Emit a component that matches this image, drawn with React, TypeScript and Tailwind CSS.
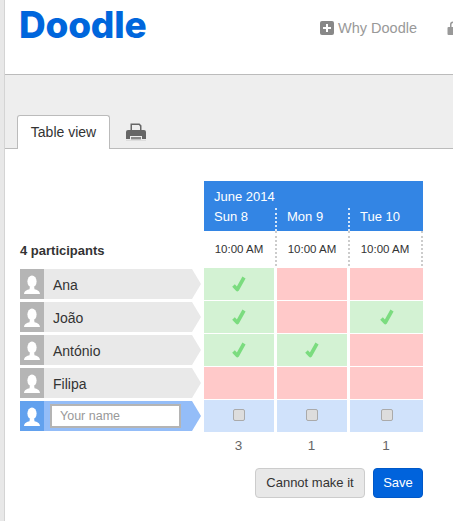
const participants = [
  { name: 'Ana', votes: [true, false, false] },
  { name: 'João', votes: [true, false, true] },
  { name: 'António', votes: [true, true, false] },
  { name: 'Filipa', votes: [false, false, false] },
];

const columns = [
  { day: 'Sun 8', total: 3 },
  { day: 'Mon 9', total: 1 },
  { day: 'Tue 10', total: 1 },
];

function Person() {
  return (
    <svg width="24" height="30" viewBox="0 0 24 30" fill="white">
      <ellipse cx="12" cy="12.5" rx="4.6" ry="6" />
      <path d="M9.8 18h4.4l.3 2.2c2.500.8 5.300 1.500 5.500 4.800H4c.2-3.300 3-4 5.500-4.800z" />
    </svg>
  );
}

function Check() {
  return (
    <svg width="16" height="18" viewBox="0 0 16 18" fill="none">
      <path d="M2.500 10.500 6.300 14.500 13 2.500" stroke="#7bdc7f" strokeWidth="3.600" strokeLinejoin="round" />
    </svg>
  );
}

function Printer() {
  return (
    <svg width="20" height="18" viewBox="0 0 20 18" className="mt-[2px]">
      <path d="M4.500.5h9l2 2v5h-1.500v-4l-1-1.500H6v5.500H4.500z" fill="#666" />
      <path d="M2 7h16a2 2 0 0 1 2 2v7H16v-3H4v3H0V9a2 2 0 0 1 2-2z" fill="#666" />
      <rect x="5" y="14" width="10" height="2.500" fill="#888" />
      <rect x="0" y="16.800" width="20" height="1.200" fill="#ddd" />
    </svg>
  );
}

function Lock() {
  return (
    <svg width="12" height="14" viewBox="0 0 12 14" fill="#999">
      <path d="M3 6V3.500a3 3 0 0 1 6 0V6H7.500V3.500a1.500 1.500 0 0 0-3 0V6z" />
      <rect x="0.500" y="6" width="11" height="8" rx="1" />
    </svg>
  );
}

export default function App() {
  return (
    <div className="flex w-[453px] h-[521px] overflow-hidden bg-white text-[#333] font-['Liberation_Sans',Arial,sans-serif]">
      <div className="w-[5px] shrink-0 bg-[#e8e8e8] border-r border-[#d4d4d4]" />
      <div className="w-[448px] shrink-0">
        {/* Header */}
        <div className="h-[75px] border-b border-[#bbb] flex items-start pl-[14px]">
          <div className="w-[301px] shrink-0 text-[37px] leading-[44px] font-extrabold font-['Inter',sans-serif] text-[#0066dc] tracking-[-0.250px] mt-[3px]">Doodle</div>
          <div className="flex items-center gap-[4px] mt-[20px] text-[#999] text-[14.500px] leading-[16px] whitespace-nowrap">
            <span className="w-[14px] h-[14px] rounded-[2px] bg-[#888] flex items-center justify-center">
              <svg width="10" height="10" viewBox="0 0 10 10" fill="white">
                <path d="M4 1h2v3h3v2H6v3H4V6H1V4h3z" />
              </svg>
            </span>
            <span>Why Doodle</span>
            <span className="ml-[26px]"><Lock /></span>
          </div>
        </div>

        {/* Tabs */}
        <div className="h-[74px] bg-[#eee] border-b border-[#bbb] flex items-end pl-[12px]">
          <div className="w-[93px] h-[34px] -mb-px bg-white border border-b-0 border-[#bbb] rounded-t-[3px] flex items-center justify-center text-[14px] text-[#333]">
            Table view
          </div>
          <div className="ml-[16px] mb-[7px]"><Printer /></div>
        </div>

        {/* Poll */}
        <div className="pl-[15px] pt-[32px]">
          <div className="grid grid-cols-[181px_70px_70px_73px] gap-x-[3px] w-[403px]">
            <div className="row-span-2 self-end h-[37px] pt-[2px] flex items-center font-bold text-[13px] text-[#333]">4 participants</div>
            <div className="col-span-3 -mb-px bg-[#3385e4] text-white h-[50px] flex flex-col">
              <div className="h-[27px] pl-[10px] pt-[8px] text-[13px] leading-[16px]">June 2014</div>
              <div className="grid grid-cols-[73px_73px_73px] h-[23px]">
                {columns.map((c, i) => (
                  <div key={c.day} className={`pl-[10px] text-[13px] leading-[18px] ${i < 2 ? 'border-r-2 border-dotted border-white/80' : ''}`}>{c.day}</div>
                ))}
              </div>
            </div>
            <div className="col-span-3 grid grid-cols-[73px_73px_73px] h-[37px] mt-px">
              {columns.map(c => (
                <div key={c.day} className="pr-[1px] pt-[3px] flex items-center justify-center text-[11.500px] text-[#333] border-r-2 border-dotted border-[#ccc] mb-[2px]">10:00 AM</div>
              ))}
            </div>

            {participants.map(p => (
              <div key={p.name} className="contents">
                <div className="flex self-center h-[30px] mb-px">
                  <div className="w-[24px] bg-[#b5b5b5]"><Person /></div>
                  <div className="w-[157px] bg-[#e9e9e9] [clip-path:polygon(0_0,148px_0,157px_50%,148px_100%,0_100%)] pl-[9px] pt-[2px] flex items-center text-[14px] text-[#333]">{p.name}</div>
                </div>
                {p.votes.map((v, i) => (
                  <div key={i} className={`h-[32px] mb-px flex items-center justify-center ${v ? 'bg-[#d3f2d3]' : 'bg-[#ffc9c9]'}`}>
                    {v && <Check />}
                  </div>
                ))}
              </div>
            ))}

            <div className="flex self-center h-[30px] mb-px">
              <div className="w-[24px] bg-[#62a1ee]"><Person /></div>
              <div className="w-[157px] bg-[#94bdf8] [clip-path:polygon(0_0,148px_0,157px_50%,148px_100%,0_100%)] pl-[6px] flex items-center">
                <input placeholder="Your name" className="w-[131px] h-[24px] bg-white border-2 border-[#b4b4b4] pl-[8px] text-[12.500px] outline-none placeholder:text-[#999]" />
              </div>
            </div>
            {columns.map(c => (
              <div key={c.day} className="h-[32px] mb-px bg-[#d0e2fb] flex items-center justify-center">
                <input type="checkbox" className="appearance-none block w-[12px] h-[12px] rounded-[2px] bg-[#ddd] border border-[#aaa] -mt-[2px]" />
              </div>
            ))}

            <div />
            {columns.map(c => (
              <div key={c.day} className="h-[27px] pt-[5px] pr-[1px] text-center text-[13.500px] leading-[16px] text-[#666]">{c.total}</div>
            ))}
          </div>

          <div className="w-[403px] flex justify-end gap-[8px] mt-[8px]">
            <button className="w-[110px] h-[30px] rounded-[4px] bg-[#e8e8e8] border border-[#ccc] text-[13px] text-[#333]">Cannot make it</button>
            <button className="w-[50px] h-[30px] rounded-[4px] bg-[#0063dc] border border-[#0058c8] text-[13px] text-white">Save</button>
          </div>
        </div>
      </div>
    </div>
  );
}
